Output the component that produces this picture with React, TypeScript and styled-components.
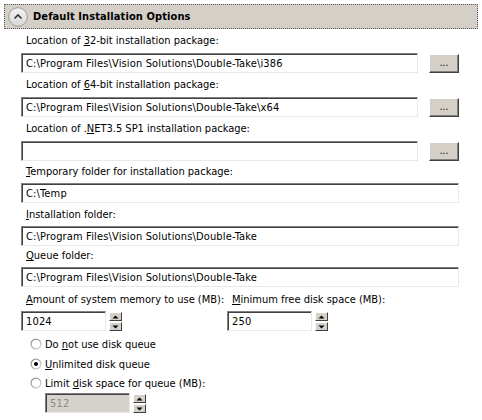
import React from "react";
import styled, { createGlobalStyle } from "styled-components";

const Global = createGlobalStyle`
  html, body { margin: 0; padding: 0; background: #ffffff; }
  body { font-family: "DejaVu Sans Condensed", "DejaVu Sans", sans-serif; font-size: 11px; color: #000; }
`;

const Page = styled.div`
  width: 482px;
  height: 420px;
  padding: 4px 4px 0 4px;
  box-sizing: border-box;
  display: flex;
  flex-direction: column;
`;

const Header = styled.div`
  height: 25px;
  box-sizing: border-box;
  border: 1px dotted #555;
  background: #d4d0c8;
  display: flex;
  align-items: center;
  gap: 5px;
  padding-left: 3px;
`;

const HeaderTitle = styled.span`
  font-weight: bold;
  font-size: 11px;
  letter-spacing: 0.1px;
`;

const Body = styled.div`
  display: flex;
  flex-direction: column;
  padding-left: 17px;
  width: 438px;
`;

const Label = styled.div<{ $mt: number; $indent?: number }>`
  margin-top: ${(p) => p.$mt}px;
  padding-left: ${(p) => p.$indent ?? 5}px;
  height: 13px;
  line-height: 13px;
  white-space: nowrap;
`;

const Row = styled.div<{ $mt: number; $indent?: number }>`
  display: flex;
  align-items: center;
  margin-top: ${(p) => p.$mt}px;
  padding-left: ${(p) => p.$indent ?? 0}px;
`;

const Input = styled.div<{ $w?: number; $disabled?: boolean }>`
  box-sizing: border-box;
  height: 20px;
  width: ${(p) => (p.$w ? `${p.$w}px` : "auto")};
  flex: ${(p) => (p.$w ? "none" : "1")};
  background: ${(p) => (p.$disabled ? "#d6d3cc" : "#ffffff")};
  color: ${(p) => (p.$disabled ? "#8a8a8a" : "#000")};
  border-top: 1px solid #808080;
  border-left: 1px solid #808080;
  border-right: 1px solid #e8e8e8;
  border-bottom: 1px solid #e8e8e8;
  box-shadow: inset 1px 1px 0 #404040;
  padding: 0 4px;
  line-height: 19px;
  letter-spacing: 0.15px;
  white-space: nowrap;
  overflow: hidden;
`;

const BrowseButton = styled.div`
  box-sizing: border-box;
  width: 30px;
  height: 19px;
  margin-left: 11px;
  background: #d4d0c8;
  border-top: 1px solid #ffffff;
  border-left: 1px solid #ffffff;
  border-right: 1px solid #404040;
  border-bottom: 1px solid #404040;
  box-shadow: inset -1px -1px 0 #808080;
  display: flex;
  align-items: center;
  justify-content: center;
  font-size: 10px;
  padding-bottom: 2px;
`;

const TwoCols = styled.div`
  display: flex;
`;

const Col = styled.div<{ $w: number }>`
  width: ${(p) => p.$w}px;
  display: flex;
  flex-direction: column;
`;

const SpinBox = styled.div`
  display: flex;
  flex-direction: column;
  gap: 1px;
  margin-left: 3px;
  margin-top: 2px;
`;

const SpinBtn = styled.div`
  box-sizing: border-box;
  width: 13px;
  height: 9px;
  background: #d4d0c8;
  border-top: 1px solid #ffffff;
  border-left: 1px solid #ffffff;
  border-right: 1px solid #404040;
  border-bottom: 1px solid #404040;
  display: flex;
  align-items: center;
  justify-content: center;
`;

const Arrow = ({ up }: { up?: boolean }) => (
  <svg width="7" height="4" viewBox="0 0 7 4">
    {up ? <polygon points="0.5,3.5 3.5,0.5 6.5,3.5" fill="#000" /> : <polygon points="0.5,0.5 6.5,0.5 3.5,3.5" fill="#000" />}
  </svg>
);

const Spinner = () => (
  <SpinBox>
    <SpinBtn>
      <Arrow up />
    </SpinBtn>
    <SpinBtn>
      <Arrow />
    </SpinBtn>
  </SpinBox>
);

const RadioRow = styled.div<{ $mt: number }>`
  display: flex;
  align-items: center;
  gap: 3px;
  margin-top: ${(p) => p.$mt}px;
  padding-left: 9px;
  height: 14px;
`;

const RadioCircle = ({ checked }: { checked?: boolean }) => (
  <svg width="12" height="12" viewBox="0 0 12 12">
    <defs>
      <linearGradient id="rg" x1="0" y1="0" x2="1" y2="1">
        <stop offset="0" stopColor="#808080" />
        <stop offset="1" stopColor="#e0e0e0" />
      </linearGradient>
    </defs>
    <circle cx="6" cy="6" r="5.5" fill="url(#rg)" />
    <circle cx="6" cy="6" r="4.3" fill="#ffffff" />
    {checked && <circle cx="6" cy="6" r="2" fill="#000" />}
  </svg>
);

const CollapseIcon = () => (
  <svg width="20" height="20" viewBox="0 0 20 20">
    <defs>
      <linearGradient id="cg" x1="0" y1="0" x2="0" y2="1">
        <stop offset="0" stopColor="#f4f4f4" />
        <stop offset="1" stopColor="#d8d8d8" />
      </linearGradient>
    </defs>
    <circle cx="10" cy="10" r="9.3" fill="url(#cg)" stroke="#9a9a9a" strokeWidth="1" />
    <polyline points="6.5,11.5 10,8 13.5,11.5" fill="none" stroke="#333" strokeWidth="1.6" />
  </svg>
);

const U = styled.span`
  text-decoration: underline;
  text-underline-offset: 1px;
`;

export default function App() {
  const path = "C:\\Program Files\\Vision Solutions\\Double-Take";
  return (
    <>
      <Global />
      <Page>
        <Header>
          <CollapseIcon />
          <HeaderTitle>Default Installation Options</HeaderTitle>
        </Header>
        <Body>
          <Label $mt={5}>
            Location of <U>3</U>2-bit installation package:
          </Label>
          <Row $mt={6}>
            <Input>{path + "\\i386"}</Input>
            <BrowseButton>...</BrowseButton>
          </Row>
          <Label $mt={5}>
            Location of <U>6</U>4-bit installation package:
          </Label>
          <Row $mt={6}>
            <Input>{path + "\\x64"}</Input>
            <BrowseButton>...</BrowseButton>
          </Row>
          <Label $mt={5}>
            Location of .<U>N</U>ET3.5 SP1 installation package:
          </Label>
          <Row $mt={6}>
            <Input />
            <BrowseButton>...</BrowseButton>
          </Row>
          <Label $mt={4}>
            <U>T</U>emporary folder for installation package:
          </Label>
          <Row $mt={5}>
            <Input>C:\Temp</Input>
          </Row>
          <Label $mt={5}>
            <U>I</U>nstallation folder:
          </Label>
          <Row $mt={5}>
            <Input>{path}</Input>
          </Row>
          <Label $mt={3}>
            <U>Q</U>ueue folder:
          </Label>
          <Row $mt={5}>
            <Input>{path}</Input>
          </Row>
          <TwoCols>
            <Col $w={206}>
              <Label $mt={6}>
                <U>A</U>mount of system memory to use (MB):
              </Label>
              <Row $mt={4}>
                <Input $w={85}>1024</Input>
                <Spinner />
              </Row>
            </Col>
            <Col $w={232}>
              <Label $mt={6}>
                <U>M</U>inimum free disk space (MB):
              </Label>
              <Row $mt={4}>
                <Input $w={85}>250</Input>
                <Spinner />
              </Row>
            </Col>
          </TwoCols>
          <RadioRow $mt={6}>
            <RadioCircle />
            <span>
              Do <U>n</U>ot use disk queue
            </span>
          </RadioRow>
          <RadioRow $mt={6}>
            <RadioCircle checked />
            <span>
              <U>U</U>nlimited disk queue
            </span>
          </RadioRow>
          <RadioRow $mt={5}>
            <RadioCircle />
            <span>
              Limit <U>d</U>isk space for queue (MB):
            </span>
          </RadioRow>
          <Row $mt={2} $indent={24}>
            <Input $w={85} $disabled>
              512
            </Input>
            <Spinner />
          </Row>
        </Body>
      </Page>
    </>
  );
}
